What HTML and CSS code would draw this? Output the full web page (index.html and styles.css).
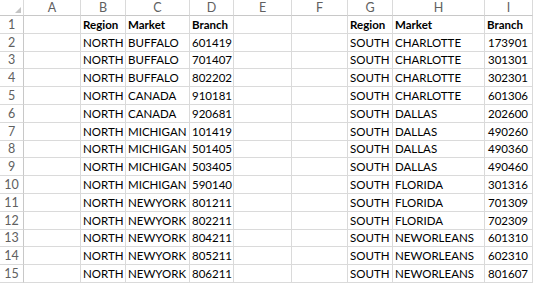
FILE: index.html
```html
<!DOCTYPE html>
<html>
<head>
<meta charset="utf-8">
<link rel="stylesheet" href="styles.css">
</head>
<body>
<div class="sheet">
  <div class="hd corner"><svg class="tri" width="6" height="6" viewBox="0 0 6 6"><polygon points="6,0 6,6 0,6" fill="#c4c4c4"/></svg></div>
  <div class="hd">A</div><div class="hd">B</div><div class="hd">C</div><div class="hd">D</div><div class="hd">E</div><div class="hd">F</div><div class="hd">G</div><div class="hd">H</div><div class="hd">I</div>

  <div class="rn">1</div><div class="c"></div><div class="c b">Region</div><div class="c b">Market</div><div class="c b">Branch</div><div class="c"></div><div class="c"></div><div class="c b">Region</div><div class="c b">Market</div><div class="c b">Branch</div>
  <div class="rn">2</div><div class="c"></div><div class="c">NORTH</div><div class="c">BUFFALO</div><div class="c">601419</div><div class="c"></div><div class="c"></div><div class="c">SOUTH</div><div class="c">CHARLOTTE</div><div class="c r">173901</div>
  <div class="rn">3</div><div class="c"></div><div class="c">NORTH</div><div class="c">BUFFALO</div><div class="c">701407</div><div class="c"></div><div class="c"></div><div class="c">SOUTH</div><div class="c">CHARLOTTE</div><div class="c r">301301</div>
  <div class="rn">4</div><div class="c"></div><div class="c">NORTH</div><div class="c">BUFFALO</div><div class="c">802202</div><div class="c"></div><div class="c"></div><div class="c">SOUTH</div><div class="c">CHARLOTTE</div><div class="c r">302301</div>
  <div class="rn">5</div><div class="c"></div><div class="c">NORTH</div><div class="c">CANADA</div><div class="c">910181</div><div class="c"></div><div class="c"></div><div class="c">SOUTH</div><div class="c">CHARLOTTE</div><div class="c r">601306</div>
  <div class="rn">6</div><div class="c"></div><div class="c">NORTH</div><div class="c">CANADA</div><div class="c">920681</div><div class="c"></div><div class="c"></div><div class="c">SOUTH</div><div class="c">DALLAS</div><div class="c r">202600</div>
  <div class="rn">7</div><div class="c"></div><div class="c">NORTH</div><div class="c">MICHIGAN</div><div class="c">101419</div><div class="c"></div><div class="c"></div><div class="c">SOUTH</div><div class="c">DALLAS</div><div class="c r">490260</div>
  <div class="rn">8</div><div class="c"></div><div class="c">NORTH</div><div class="c">MICHIGAN</div><div class="c">501405</div><div class="c"></div><div class="c"></div><div class="c">SOUTH</div><div class="c">DALLAS</div><div class="c r">490360</div>
  <div class="rn">9</div><div class="c"></div><div class="c">NORTH</div><div class="c">MICHIGAN</div><div class="c">503405</div><div class="c"></div><div class="c"></div><div class="c">SOUTH</div><div class="c">DALLAS</div><div class="c r">490460</div>
  <div class="rn">10</div><div class="c"></div><div class="c">NORTH</div><div class="c">MICHIGAN</div><div class="c">590140</div><div class="c"></div><div class="c"></div><div class="c">SOUTH</div><div class="c">FLORIDA</div><div class="c r">301316</div>
  <div class="rn">11</div><div class="c"></div><div class="c">NORTH</div><div class="c">NEWYORK</div><div class="c">801211</div><div class="c"></div><div class="c"></div><div class="c">SOUTH</div><div class="c">FLORIDA</div><div class="c r">701309</div>
  <div class="rn">12</div><div class="c"></div><div class="c">NORTH</div><div class="c">NEWYORK</div><div class="c">802211</div><div class="c"></div><div class="c"></div><div class="c">SOUTH</div><div class="c">FLORIDA</div><div class="c r">702309</div>
  <div class="rn">13</div><div class="c"></div><div class="c">NORTH</div><div class="c">NEWYORK</div><div class="c">804211</div><div class="c"></div><div class="c"></div><div class="c">SOUTH</div><div class="c">NEWORLEANS</div><div class="c r">601310</div>
  <div class="rn">14</div><div class="c"></div><div class="c">NORTH</div><div class="c">NEWYORK</div><div class="c">805211</div><div class="c"></div><div class="c"></div><div class="c">SOUTH</div><div class="c">NEWORLEANS</div><div class="c r">602310</div>
  <div class="rn">15</div><div class="c"></div><div class="c">NORTH</div><div class="c">NEWYORK</div><div class="c">806211</div><div class="c"></div><div class="c"></div><div class="c">SOUTH</div><div class="c">NEWORLEANS</div><div class="c r">801607</div>
</div>
</body>
</html>
```
FILE: styles.css
```css
html, body {
  margin: 0;
  padding: 0;
  background: #fff;
}
.sheet {
  display: grid;
  grid-template-columns: 24px 57px 45px 64px 44px 58px 56px 45px 92px 48px;
  grid-template-rows: 16px repeat(15, 17.8px);
  font-family: Lato, "Liberation Sans", sans-serif;
  font-size: 11.5px;
  color: #000;
  overflow: hidden;
}
.hd, .rn, .c {
  box-sizing: border-box;
  border-right: 1px solid #dadada;
  border-bottom: 1px solid #dadada;
  white-space: nowrap;
  overflow: hidden;
}
.hd {
  display: flex;
  align-items: center;
  justify-content: center;
  color: #606060;
  font-size: 12.5px;
  border-bottom-color: #c8c8c8;
}
.corner {
  position: relative;
}
.tri {
  position: absolute;
  right: 2px;
  bottom: 2px;
}
.rn {
  display: flex;
  align-items: center;
  justify-content: center;
  color: #606060;
  font-size: 12.5px;
  border-right-color: #c8c8c8;
}
.c {
  display: flex;
  align-items: flex-end;
  padding: 0 4px 2px 2px;
}
.b {
  font-weight: bold;
}
.r {
  justify-content: flex-end;
}
```
